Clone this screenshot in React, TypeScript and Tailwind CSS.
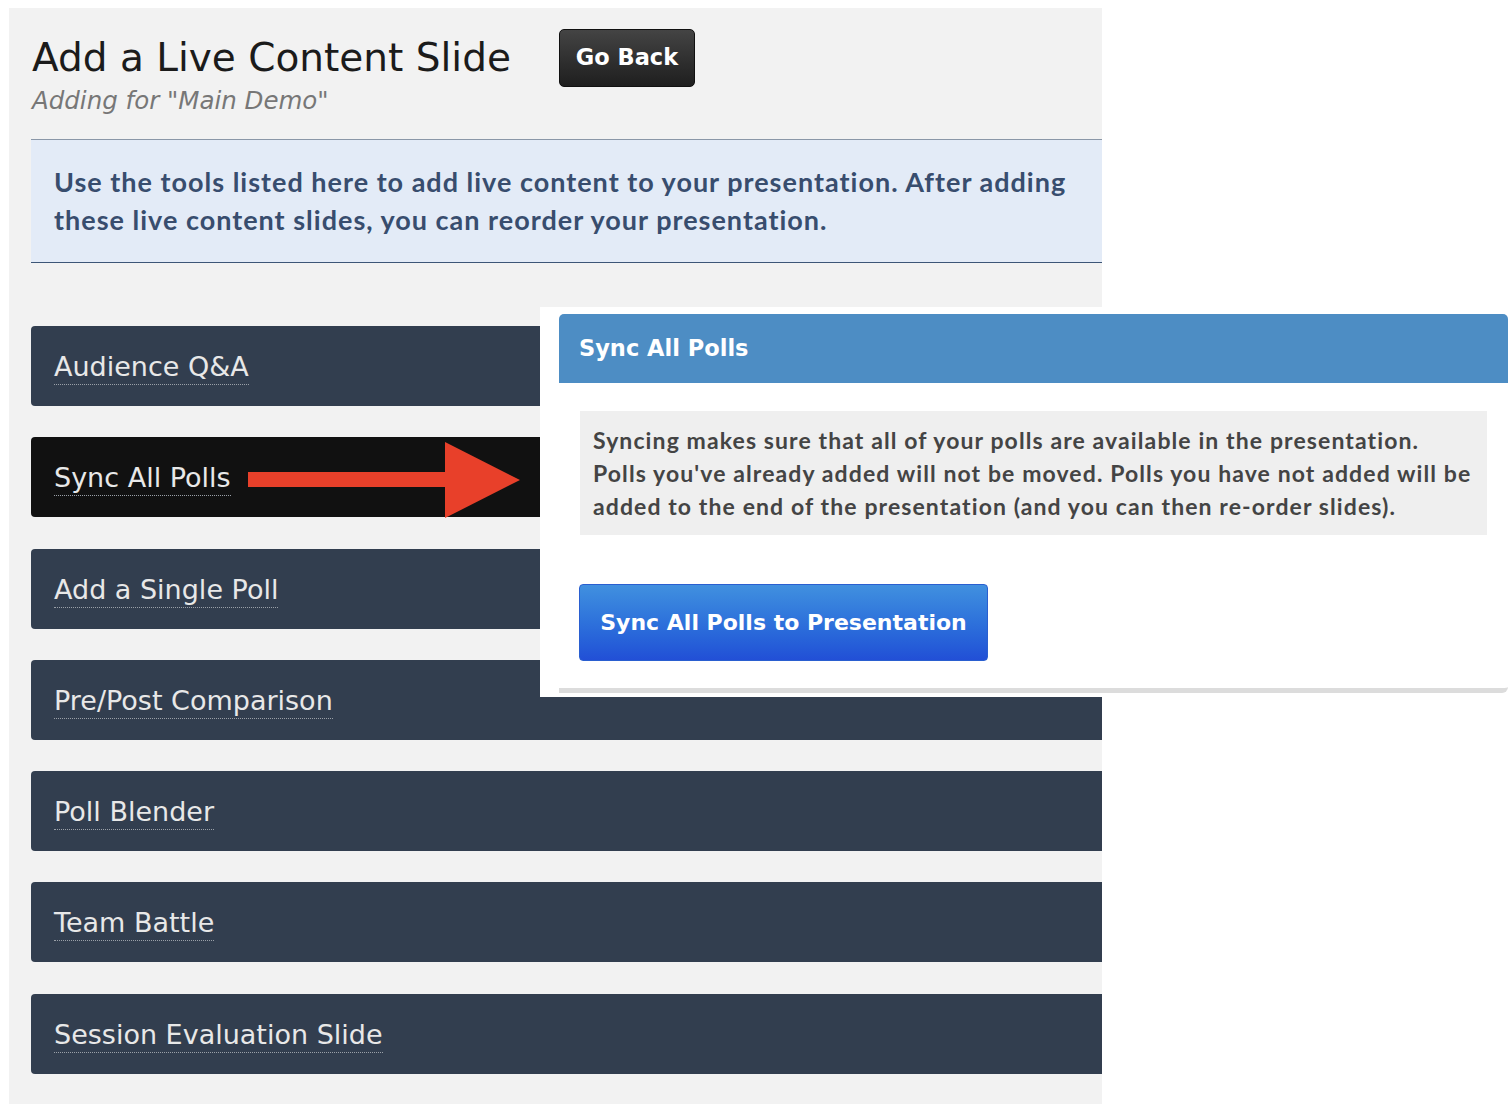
import React from "react";

const items = [
  "Audience Q&A",
  "Sync All Polls",
  "Add a Single Poll",
  "Pre/Post Comparison",
  "Poll Blender",
  "Team Battle",
  "Session Evaluation Slide",
];

// flecha roja que apunta al panel
const Arrow = () => (
  <svg className="absolute left-[248px] top-[442px]" width="273" height="76" viewBox="0 0 273 76">
    <polygon points="0,30 197,30 197,0 272,38 197,76 197,45 0,45" fill="#e8402a" />
  </svg>
);

export default function App() {
  return (
    <div className="relative w-[1512px] h-[1104px] bg-white overflow-hidden font-['DejaVu_Sans',sans-serif]">
      <div className="ml-[9px] mt-[8px] w-[1093px] h-[1096px] bg-[#f2f2f2] overflow-hidden pl-[22px]">
        {/* cabecera */}
        <div className="flex items-start pt-[21px]">
          <div>
            <h1 className="text-[39px] leading-[58px] text-[#1b1b1b] pl-[1px]">Add a Live Content Slide</h1>
            <p className="text-[24.5px] leading-[30px] italic text-[#777] pl-[1px] -mt-[1px]">Adding for "Main Demo"</p>
          </div>
          <button className="ml-[48px] w-[136px] h-[58px] rounded-[5px] border border-[#111] bg-gradient-to-b from-[#444] to-[#1f1f1f] text-white text-[22.5px] font-bold">
            Go Back
          </button>
        </div>

        {/* aviso */}
        <div className="mt-[23px] w-[1100px] border-t border-[#8a97a8] border-b border-b-[#3d5677] bg-[#e3ebf7] pl-[23px] pt-[23px] pb-[23px]">
          <p className="font-['Lato',sans-serif] font-bold text-[27px] tracking-[1px] leading-[38px] text-[#384d6e] whitespace-nowrap">
            Use the tools listed here to add live content to your presentation. After adding
            <br />
            these live content slides, you can reorder your presentation.
          </p>
        </div>

        {/* lista de herramientas */}
        <div className="mt-[63px] w-[1100px] flex flex-col gap-[31.3px]">
          {items.map((item, i) => (
            <div
              key={item}
              className={`h-[80px] rounded-[4px] pl-[23px] flex items-center ${
                i === 1 ? "bg-[#111]" : "bg-[#323e4f]"
              }`}
            >
              <span className="text-[27px] leading-[34px] text-[#e8e8e8] border-b border-dotted border-[#9aa0a8] pt-[3px]">
                {item}
              </span>
            </div>
          ))}
        </div>
      </div>

      <Arrow />

      {/* panel superpuesto */}
      <div className="absolute left-[540px] top-[307px] w-[972px] h-[390px] bg-white pl-[19px] pt-[7px]">
        <div className="w-[949px] border-b-[5px] border-[#dcdcdc] rounded-br-[6px] pb-[27px]">
          <div className="h-[69px] bg-[#4d8dc4] rounded-t-[5px] pl-[20px] flex items-center">
            <h2 className="text-[22.5px] font-bold text-white">Sync All Polls</h2>
          </div>
          <div className="pl-[21px] pr-[21px] pt-[28px]">
            <div className="bg-[#efefef] h-[124px] pl-[13px] pt-[13px]">
              <p className="font-['Lato',sans-serif] font-bold text-[23px] tracking-[1.1px] leading-[33px] text-[#444] whitespace-nowrap">
                Syncing makes sure that all of your polls are available in the presentation.
                <br />
                Polls you've already added will not be moved. Polls you have not added will be
                <br />
                added to the end of the presentation (and you can then re-order slides).
              </p>
            </div>
            <button className="mt-[49px] w-[409px] h-[77px] rounded-[4px] border border-[#2a5fd0] bg-gradient-to-b from-[#4190df] to-[#224fd6] text-white text-[22px] font-bold whitespace-nowrap -ml-[1px]">
              Sync All Polls to Presentation
            </button>
          </div>
        </div>
      </div>
    </div>
  );
}
